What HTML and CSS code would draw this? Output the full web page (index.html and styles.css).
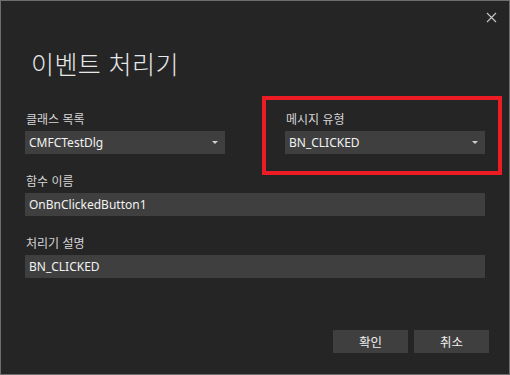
FILE: index.html
```html
<!DOCTYPE html>
<html lang="ko">
<head>
<meta charset="utf-8">
<link rel="stylesheet" href="styles.css">
</head>
<body>
<div class="dialog">
  <div class="titlebar">
    <svg class="close" width="11" height="11" viewBox="0 0 11 11"><path d="M1 1L10 10M10 1L1 10" stroke="#c8c8c8" stroke-width="1.1" fill="none"/></svg>
  </div>
  <h1 class="title">이벤트 처리기</h1>
  <div class="row">
    <div class="field">
      <div class="label">클래스 목록</div>
      <div class="box combo"><span>CMFCTestDlg</span><i class="arrow"></i></div>
    </div>
    <div class="field">
      <div class="label">메시지 유형</div>
      <div class="box combo"><span>BN_CLICKED</span><i class="arrow"></i></div>
    </div>
  </div>
  <div class="field stacked">
    <div class="label">함수 이름</div>
    <div class="box wide"><span>OnBnClickedButton1</span></div>
  </div>
  <div class="field stacked">
    <div class="label">처리기 설명</div>
    <div class="box wide"><span>BN_CLICKED</span></div>
  </div>
  <div class="buttons">
    <div class="btn">확인</div>
    <div class="btn">취소</div>
  </div>
  <div class="highlight"></div>
</div>
</body>
</html>
```
FILE: styles.css
```css
html, body {
  margin: 0;
  padding: 0;
  background: #252526;
}
.dialog {
  position: relative;
  box-sizing: border-box;
  width: 510px;
  height: 375px;
  border: 1px solid #6e6e6e;
  background: #252526;
  font-family: "Noto Sans", "Noto Sans CJK KR", sans-serif;
  color: #f0f0f0;
  padding: 0 0 0 24px;
  display: flex;
  flex-direction: column;
}
.titlebar {
  display: flex;
  justify-content: flex-end;
  height: 28px;
  padding: 11px 12px 0 0;
  box-sizing: border-box;
}
.close {
  display: block;
}
.title {
  margin: 18px 0 0 6px;
  font-family: "Noto Sans CJK KR", sans-serif;
  font-weight: 300;
  font-size: 25px;
  line-height: 32px;
  color: #e8e8e8;
  letter-spacing: 0.4px;
}
.row {
  display: flex;
  gap: 60px;
  margin-top: 32px;
}
.field {
  display: flex;
  flex-direction: column;
}
.stacked {
  margin-top: 19px;
}
.label {
  font-family: "Noto Sans CJK KR", sans-serif;
  font-size: 12px;
  line-height: 16px;
  color: #d6d6d6;
  padding-left: 1px;
  margin-bottom: 4px;
}
.box {
  height: 23px;
  background: #3f3f3f;
  display: flex;
  align-items: center;
  padding-left: 4px;
  box-sizing: border-box;
  font-size: 12px;
  color: #f2f2f2;
}
.combo {
  width: 200px;
  justify-content: space-between;
  padding-right: 4px;
}
.wide {
  width: 460px;
}
.arrow {
  width: 0;
  height: 0;
  border-left: 3.5px solid transparent;
  border-right: 3.5px solid transparent;
  border-top: 3.5px solid #d0d0d0;
  margin-right: 3px;
}
.buttons {
  display: flex;
  justify-content: flex-end;
  gap: 6px;
  margin-top: 52px;
  padding-right: 20px;
}
.btn {
  width: 75px;
  height: 23px;
  background: #3f3f3f;
  display: flex;
  align-items: center;
  justify-content: center;
  font-family: "Noto Sans CJK KR", sans-serif;
  font-size: 12.5px;
  color: #f0f0f0;
}
.highlight {
  position: absolute;
  left: 261px;
  top: 95px;
  width: 240px;
  height: 79px;
  box-sizing: border-box;
  border: 4px solid #ed1c24;
}
```
